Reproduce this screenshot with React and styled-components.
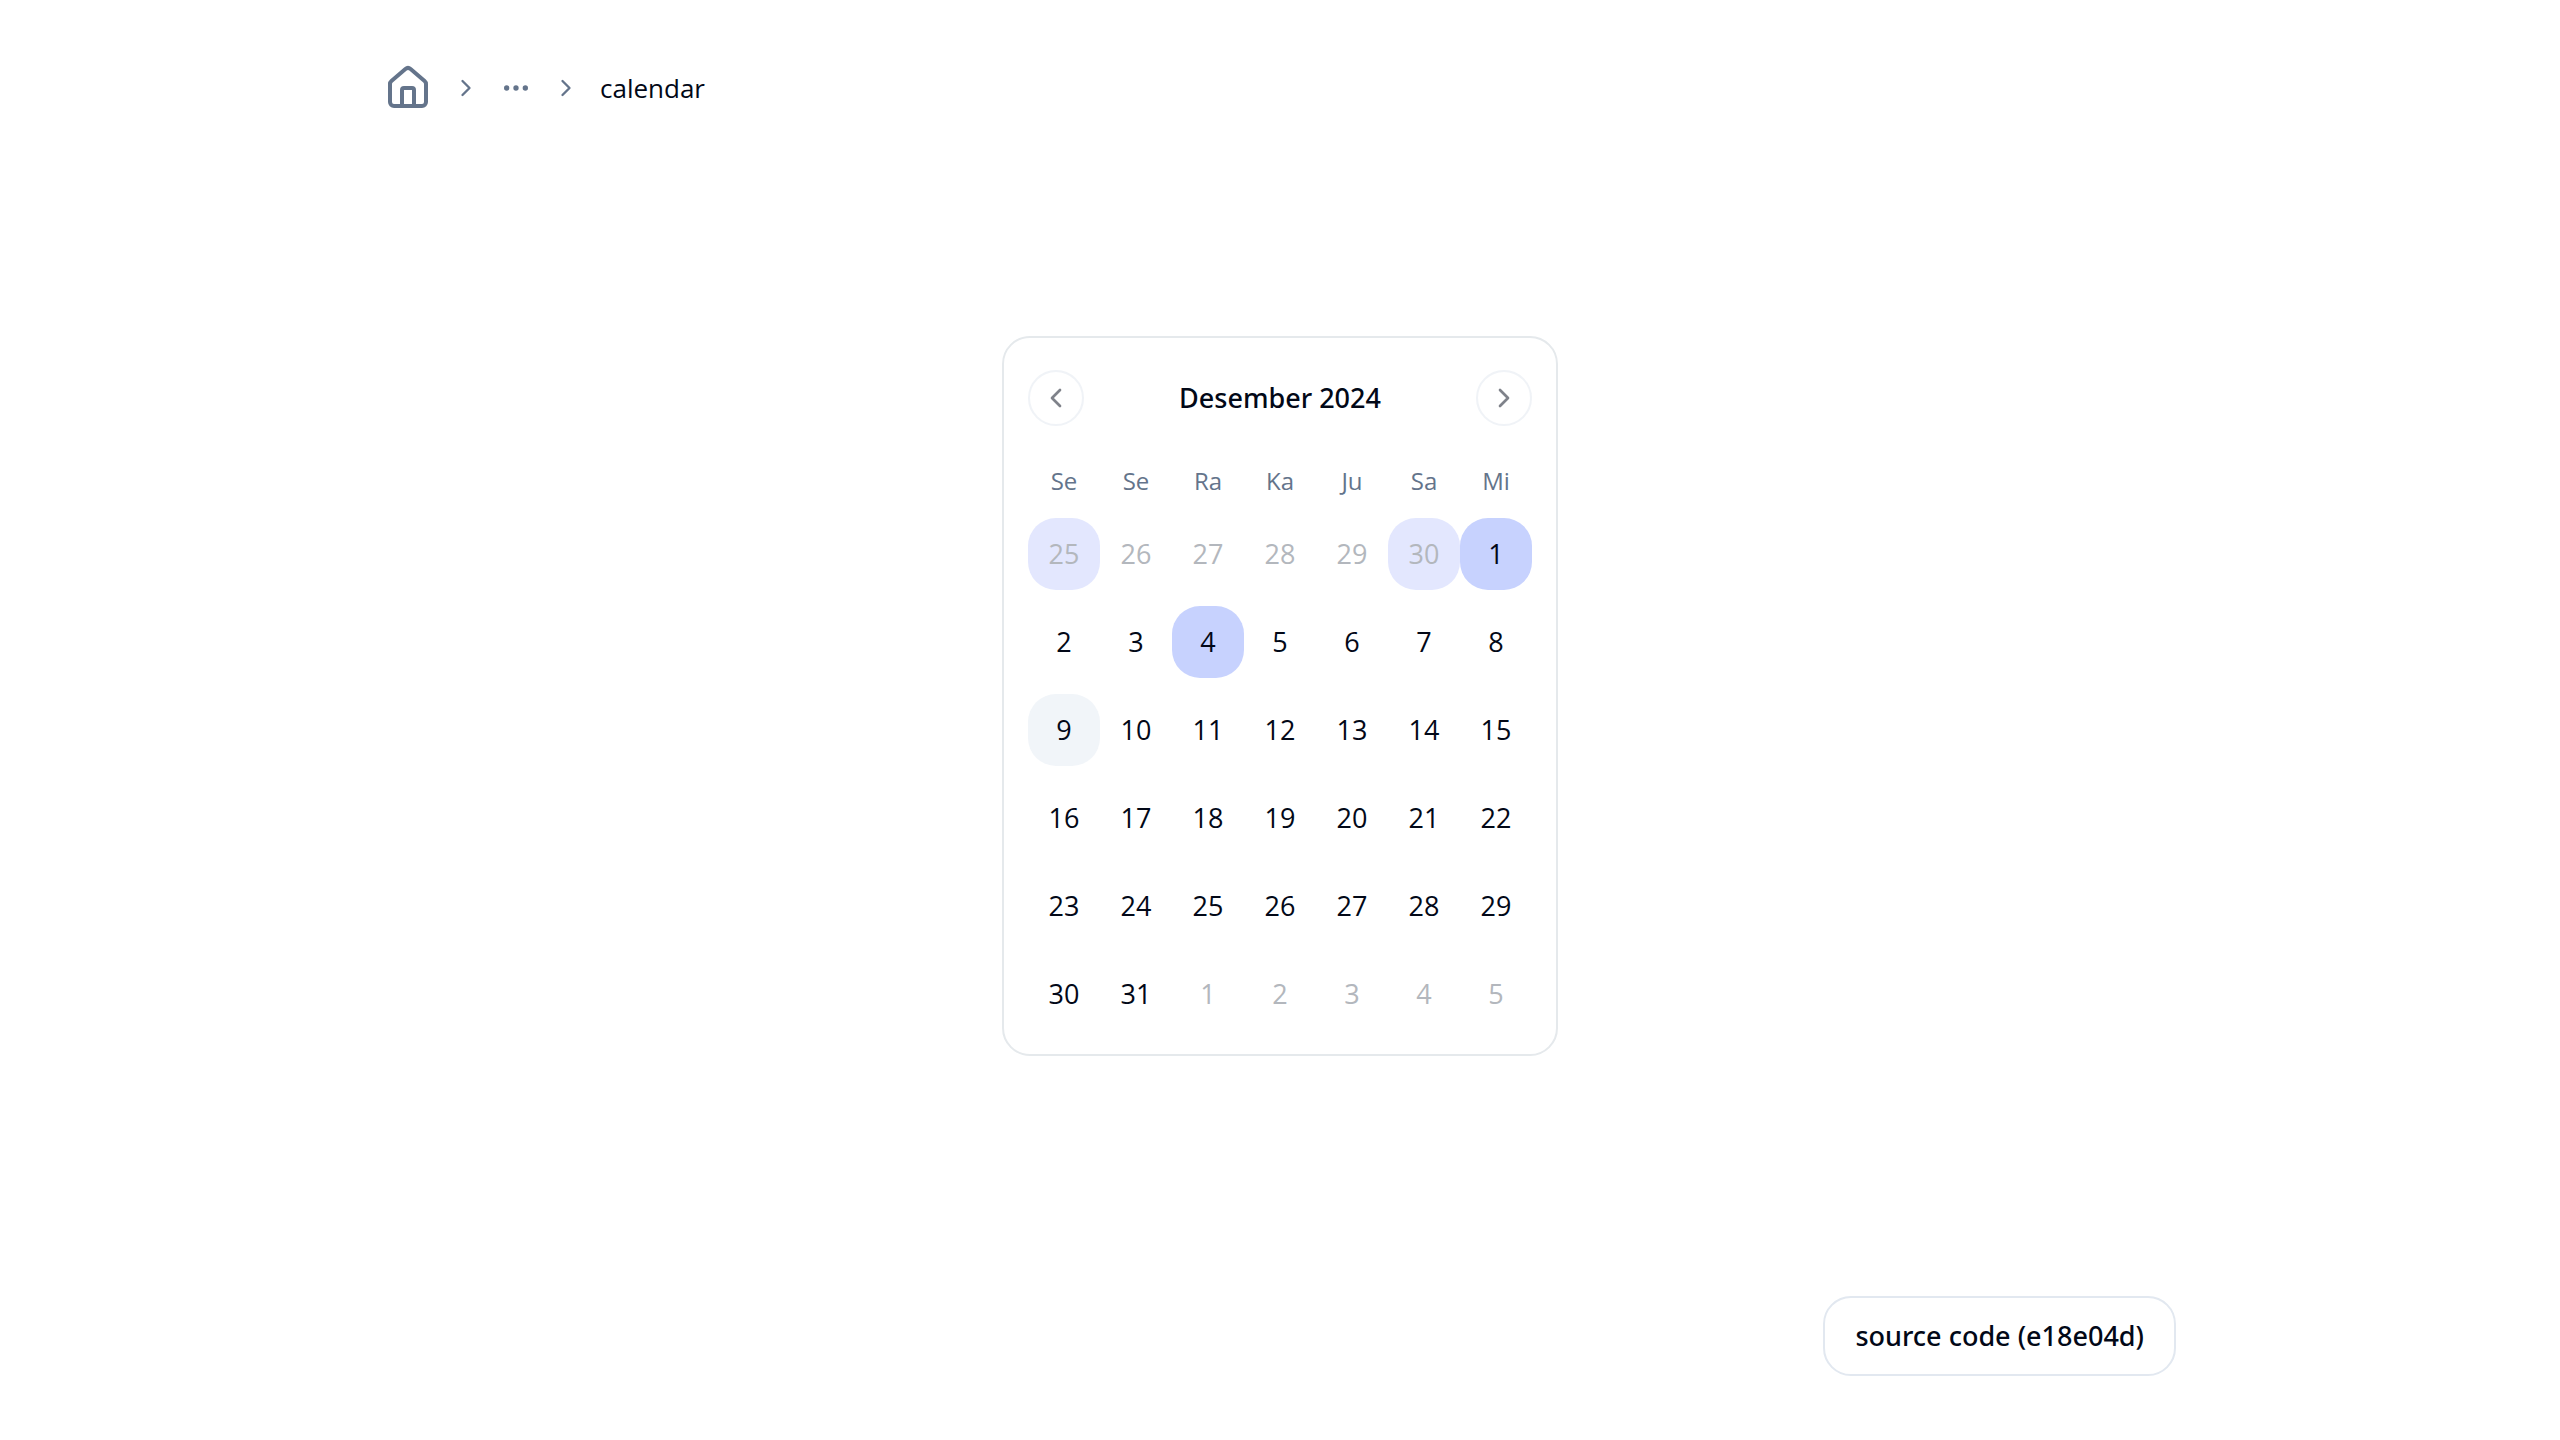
import React from "react";
import styled, { createGlobalStyle, css } from "styled-components";
import { House, ChevronLeft, ChevronRight, Ellipsis } from "lucide-react";

const GlobalStyle = createGlobalStyle`
  *, *::before, *::after { box-sizing: border-box; }
  body {
    margin: 0;
    background: #ffffff;
    color: #020817;
    font-family: "Segoe UI", "Open Sans", "Noto Sans", sans-serif;
    font-size: 27px;
    line-height: 40px;
  }
  button { font: inherit; color: inherit; margin: 0; padding: 0; cursor: pointer; }
  svg { display: block; }
`;

const Page = styled.div`
  display: flex;
  flex-direction: column;
  width: 70%;
  min-height: 100vh;
  margin: 0 auto;
  padding: 64px 0;
`;

const Crumbs = styled.ol`
  display: flex;
  align-items: center;
  gap: 20px;
  margin: 0;
  padding: 0;
  list-style: none;
  color: #64748b;
`;

const Crumb = styled.li`
  display: flex;
  align-items: center;
`;

const CrumbLink = styled.a`
  display: flex;
  color: inherit;
`;

const CrumbMenu = styled.button`
  border: 0;
  background: transparent;
`;

const CurrentPage = styled.span`
  color: #020817;
  font-size: 26px;
`;

const Main = styled.main`
  display: flex;
  flex: 1;
  align-items: center;
  justify-content: center;
  margin-bottom: 16px;
`;

const Calendar = styled.section`
  padding: 32px 24px 24px;
  border: 2px solid #e5e9ec;
  border-radius: 28px;
`;

const CalendarHeader = styled.header`
  display: flex;
  align-items: center;
  justify-content: space-between;
  margin-bottom: 32px;
`;

const Title = styled.h2`
  margin: 0;
  font-family: "Noto Sans", sans-serif;
  font-size: 27px;
  font-weight: 500;
`;

const NavButton = styled.button`
  display: flex;
  align-items: center;
  justify-content: center;
  width: 56px;
  height: 56px;
  border: 2px solid #e2e8f0;
  border-radius: 50%;
  background: transparent;
  opacity: 0.5;
`;

const MonthTable = styled.table`
  border-collapse: collapse;
  table-layout: fixed;
`;

const Weekday = styled.th`
  width: 72px;
  height: 44px;
  padding: 2px 0 0;
  color: #64748b;
  font-size: 24px;
  font-weight: 400;
`;

const DayCell = styled.td`
  padding: 16px 0 0;
`;

const fills = {
  selected: "#c7d2fe",
  range: "#e3e7fe",
  today: "#f1f5f9",
};

const Day = styled.button`
  display: block;
  width: 72px;
  height: 72px;
  border: 0;
  border-radius: 28px;
  background: ${(p) => fills[p.$fill] || "transparent"};
  ${(p) =>
    p.$outside &&
    css`
      color: #b3b7bd;
    `}
`;

const Footer = styled.footer`
  display: flex;
  justify-content: flex-end;
`;

const SourceLink = styled.a`
  padding: 18px 30px;
  border: 2px solid #e2e8f0;
  border-radius: 28px;
  color: inherit;
  font-family: "Noto Sans", sans-serif;
  font-size: 27px;
  font-weight: 500;
  text-decoration: none;
`;

const weekdays = ["Se", "Se", "Ra", "Ka", "Ju", "Sa", "Mi"];

const fillByIndex = { 0: "range", 5: "range", 6: "selected", 9: "selected", 14: "today" };

const days = [
  ...[25, 26, 27, 28, 29, 30].map((n) => ({ n, outside: true })),
  ...Array.from({ length: 31 }, (_, i) => ({ n: i + 1, outside: false })),
  ...[1, 2, 3, 4, 5].map((n) => ({ n, outside: true })),
].map((day, i) => ({ ...day, fill: fillByIndex[i] }));

const weeks = Array.from({ length: 6 }, (_, w) => days.slice(w * 7, w * 7 + 7));

export default function App() {
  return (
    <>
      <GlobalStyle />
      <Page>
        <nav aria-label="breadcrumb">
          <Crumbs>
            <Crumb>
              <CrumbLink href="#home" aria-label="Home">
                <House size={48} />
              </CrumbLink>
            </Crumb>
            <Crumb aria-hidden="true">
              <ChevronRight size={28} />
            </Crumb>
            <Crumb>
              <CrumbMenu type="button" aria-label="More">
                <Ellipsis size={32} />
              </CrumbMenu>
            </Crumb>
            <Crumb aria-hidden="true">
              <ChevronRight size={28} />
            </Crumb>
            <Crumb>
              <CurrentPage aria-current="page">calendar</CurrentPage>
            </Crumb>
          </Crumbs>
        </nav>
        <Main>
          <Calendar>
            <CalendarHeader>
              <NavButton type="button" aria-label="Previous month">
                <ChevronLeft size={32} />
              </NavButton>
              <Title>Desember 2024</Title>
              <NavButton type="button" aria-label="Next month">
                <ChevronRight size={32} />
              </NavButton>
            </CalendarHeader>
            <MonthTable>
              <thead>
                <tr>
                  {weekdays.map((name, i) => (
                    <Weekday key={i} scope="col">
                      {name}
                    </Weekday>
                  ))}
                </tr>
              </thead>
              <tbody>
                {weeks.map((week, w) => (
                  <tr key={w}>
                    {week.map((day) => (
                      <DayCell key={day.n}>
                        <Day type="button" $fill={day.fill} $outside={day.outside}>
                          {day.n}
                        </Day>
                      </DayCell>
                    ))}
                  </tr>
                ))}
              </tbody>
            </MonthTable>
          </Calendar>
        </Main>
        <Footer>
          <SourceLink href="#source">source code (e18e04d)</SourceLink>
        </Footer>
      </Page>
    </>
  );
}
